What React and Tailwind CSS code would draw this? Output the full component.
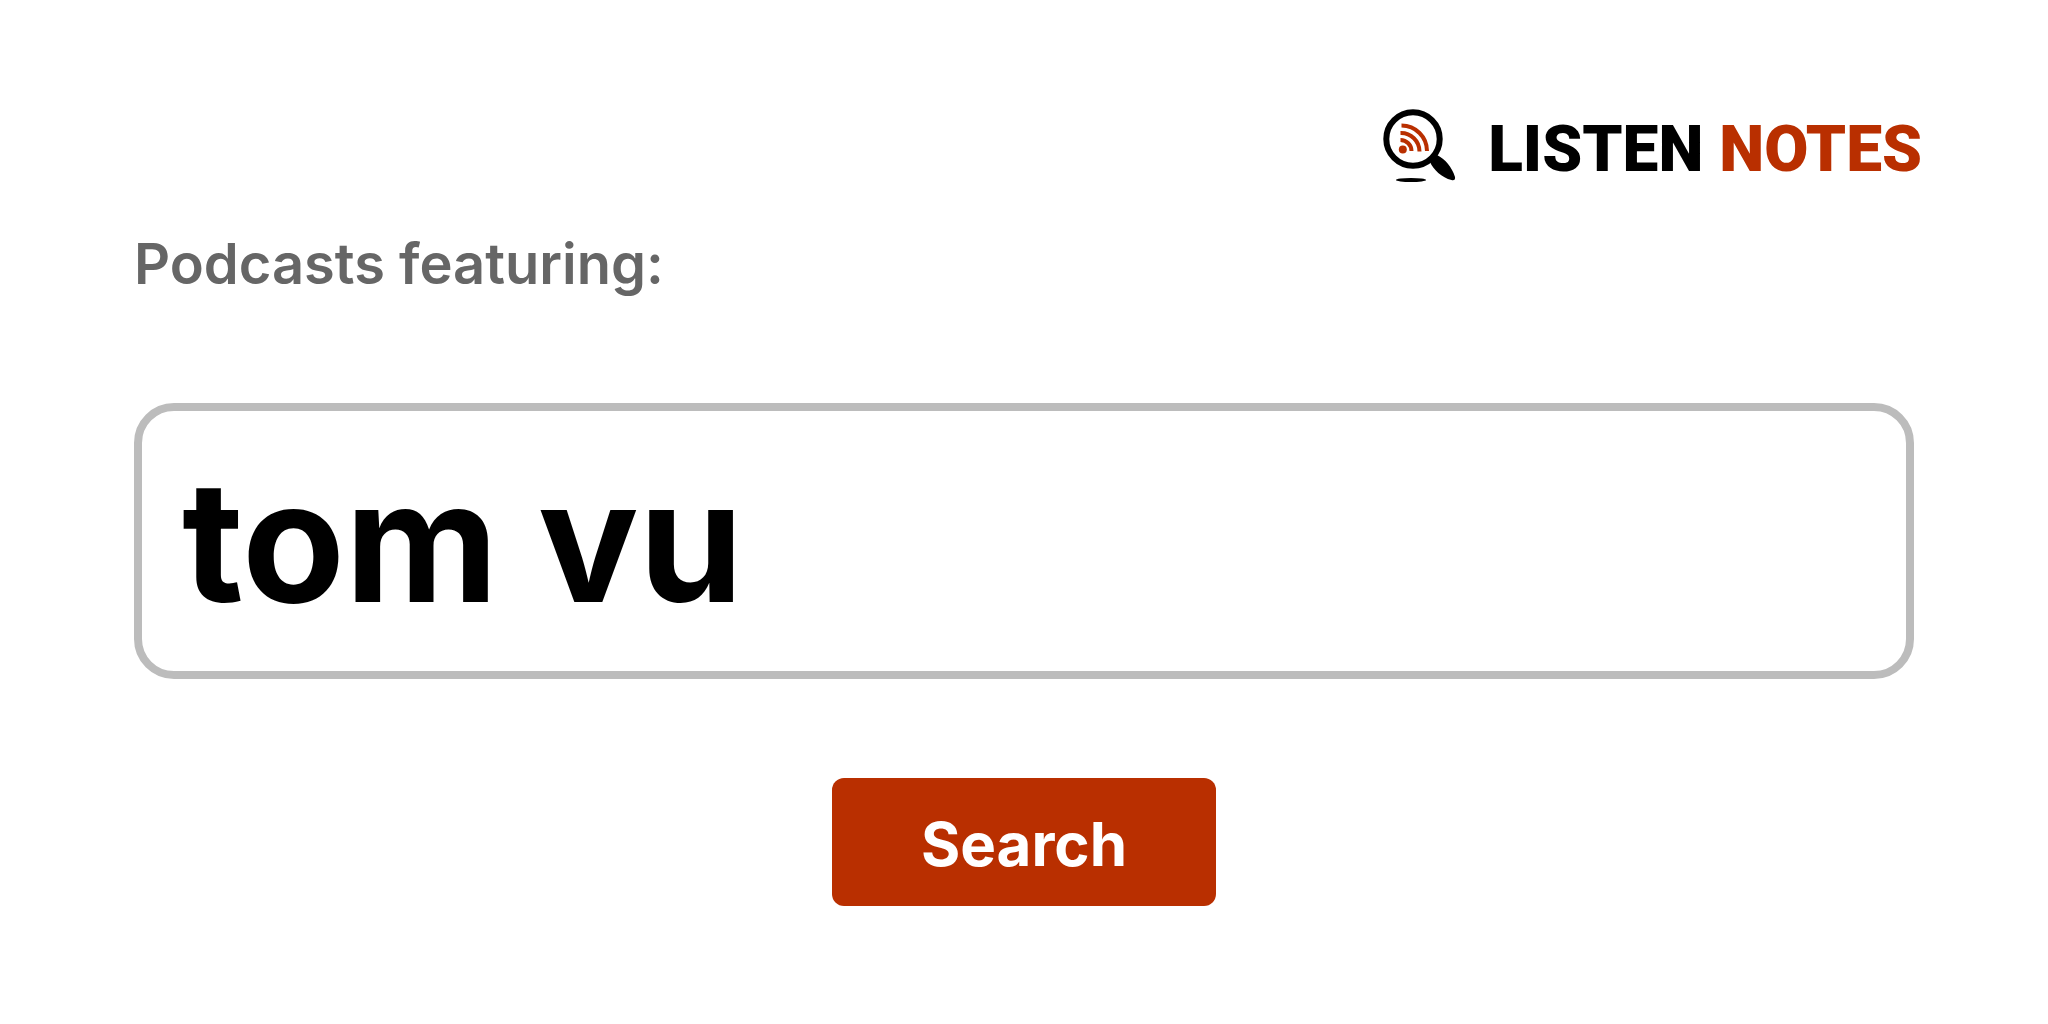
import React, { useState } from 'react';

// Magnifier with a podcast feed inside
const LogoIcon = () => (
  <svg viewBox="0 0 74 76" className="w-[74px] h-[76px]" aria-hidden="true">
    <circle cx="31" cy="31" r="26.700" fill="none" stroke="#000" strokeWidth="6" />
    <path d="M48 54 L55 47 C63 51 70 59 73 69 C73.500 71.500 72 73 69.500 72 C60 70 51 61 48 54Z" fill="#000" />
    <ellipse cx="29" cy="72" rx="15" ry="2" fill="#000" />
    <circle cx="20.800" cy="41.600" r="4" fill="#b92f00" />
    <g fill="none" stroke="#b92f00" strokeWidth="4">
      <path d="M18.500 32 A11 11 0 0 1 29.500 43" />
      <path d="M18.500 25 A18.500 18.500 0 0 1 37.500 43.500" />
      <path d="M19.500 17.500 A25.500 25.500 0 0 1 45 43" />
    </g>
  </svg>
);

const App = () => {
  const [query, setQuery] = useState('tom vu');

  return (
    <main className="min-h-screen bg-white px-[134px] pt-[108px] pb-16 font-['Inter',sans-serif]">
      <header className="flex justify-end">
        <a href="/" className="flex items-start gap-8 -mr-2">
          <LogoIcon />
          <span className="pt-1 font-['Roboto',sans-serif] font-black text-[64px] leading-[76px] text-black whitespace-nowrap">
            LISTEN <span className="text-[#b92f00]">NOTES</span>
          </span>
        </a>
      </header>

      <form onSubmit={(e) => e.preventDefault()} className="flex flex-col items-center">
        <label htmlFor="query" className="self-start mt-10 text-[56px] leading-[72px] font-semibold text-[#666]">
          Podcasts featuring:
        </label>
        <input
          id="query"
          type="text"
          value={query}
          onChange={(e) => setQuery(e.target.value)}
          className="w-full h-[276px] mt-[103px] px-10 border-8 border-[#bcbcbc] rounded-[40px] bg-white text-[168px] font-bold text-black outline-none"
        />
        <button type="submit" className="w-96 h-32 mt-[99px] pt-1 rounded-xl bg-[#b92f00] text-white text-[60px] font-bold cursor-pointer">
          Search
        </button>
      </form>
    </main>
  );
};

export default App;
